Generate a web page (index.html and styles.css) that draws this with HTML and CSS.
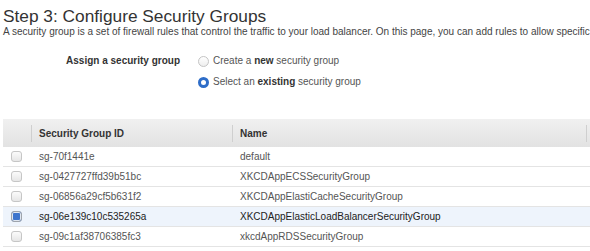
FILE: index.html
```html
<!DOCTYPE html>
<html lang="en">
<head>
  <meta charset="UTF-8">
  <title>Configure Security Groups</title>
  <link rel="stylesheet" href="styles.css">
</head>
<body>
  <h1 class="step-title">Step 3: Configure Security Groups</h1>
  <p class="step-desc">A security group is a set of firewall rules that control the traffic to your load balancer. On this page, you can add rules to allow specific traffic to reach your load balancer.</p>

  <div class="assign">
    <div class="assign-label">Assign a security group</div>
    <div class="assign-options">
      <label class="radio-row"><span class="radio"></span><span>Create a <b>new</b> security group</span></label>
      <label class="radio-row"><span class="radio checked"></span><span>Select an <b>existing</b> security group</span></label>
    </div>
  </div>

  <table class="sg-table">
    <thead>
      <tr>
        <th class="col-check"></th>
        <th class="col-id">Security Group ID</th>
        <th class="col-name">Name</th>
        <th class="col-desc"></th>
      </tr>
    </thead>
    <tbody>
      <tr><td><span class="box"></span></td><td>sg-70f1441e</td><td>default</td><td></td></tr>
      <tr><td><span class="box"></span></td><td>sg-0427727ffd39b51bc</td><td>XKCDAppECSSecurityGroup</td><td></td></tr>
      <tr><td><span class="box"></span></td><td>sg-06856a29cf5b631f2</td><td>XKCDAppElastiCacheSecurityGroup</td><td></td></tr>
      <tr class="selected"><td><span class="box checked"></span></td><td>sg-06e139c10c535265a</td><td>XKCDAppElasticLoadBalancerSecurityGroup</td><td></td></tr>
      <tr><td><span class="box"></span></td><td>sg-09c1af38706385fc3</td><td>xkcdAppRDSSecurityGroup</td><td></td></tr>
    </tbody>
  </table>
</body>
</html>
```

FILE: styles.css
```css
body {
  font-family: "Liberation Sans", Arial, sans-serif;
  margin: 0;
  padding: 7px 0 0 3px;
  color: #444;
  overflow: hidden;
}

.step-title {
  font-size: 17.3px;
  font-weight: normal;
  color: #333;
  margin: 0;
  line-height: 18px;
  white-space: nowrap;
}

.step-desc {
  font-size: 10px;
  margin: 0;
  line-height: 14px;
  white-space: nowrap;
}

.assign {
  display: flex;
  margin-top: 15px;
  font-size: 10px;
}

.assign-label {
  width: 177px;
  text-align: right;
  font-weight: bold;
  color: #333;
  line-height: 14px;
}

.assign-options {
  display: flex;
  flex-direction: column;
  gap: 7px;
  margin-left: 18px;
}

.radio-row {
  display: flex;
  align-items: center;
  gap: 4px;
  line-height: 14px;
  color: #555;
}

.radio-row b {
  color: #333;
}

.radio {
  width: 9px;
  height: 9px;
  border: 1px solid #c4c4c4;
  border-radius: 50%;
  background: linear-gradient(#fff, #eee);
}

.radio.checked {
  width: 5px;
  height: 5px;
  border: 3px solid #2e6dc8;
  background: #fff;
}

.sg-table {
  margin-top: 30px;
  border-collapse: collapse;
  table-layout: fixed;
  width: 640px;
  font-size: 10px;
}

.sg-table th {
  height: 28px;
  padding: 0 0 0 8px;
  text-align: left;
  font-weight: bold;
  color: #333;
  background:
    linear-gradient(#cfcfcf, #cfcfcf) left center / 1px 17px no-repeat,
    linear-gradient(#f0f0f0, #e2e2e2);
}

.sg-table th.col-check {
  background: linear-gradient(#f0f0f0, #e2e2e2);
}

.col-check {
  width: 20px;
}

.col-id {
  width: 193px;
}

.col-name {
  width: 346px;
}

.sg-table td {
  height: 19px;
  padding: 0 0 0 8px;
  border-bottom: 1px solid #e4e4e4;
  color: #555;
  white-space: nowrap;
}

.box {
  display: block;
  width: 9px;
  height: 9px;
  border: 1px solid #c6c6c6;
  border-radius: 3px;
  background: linear-gradient(#fbfbfb, #e6e6e6);
}

.box.checked {
  border-color: #9fa4ab;
  background: #3d74cc;
  box-shadow: inset 0 0 0 1px #dfe6f0;
}

.selected td {
  background: #eef4fc;
  color: #222;
}
```
